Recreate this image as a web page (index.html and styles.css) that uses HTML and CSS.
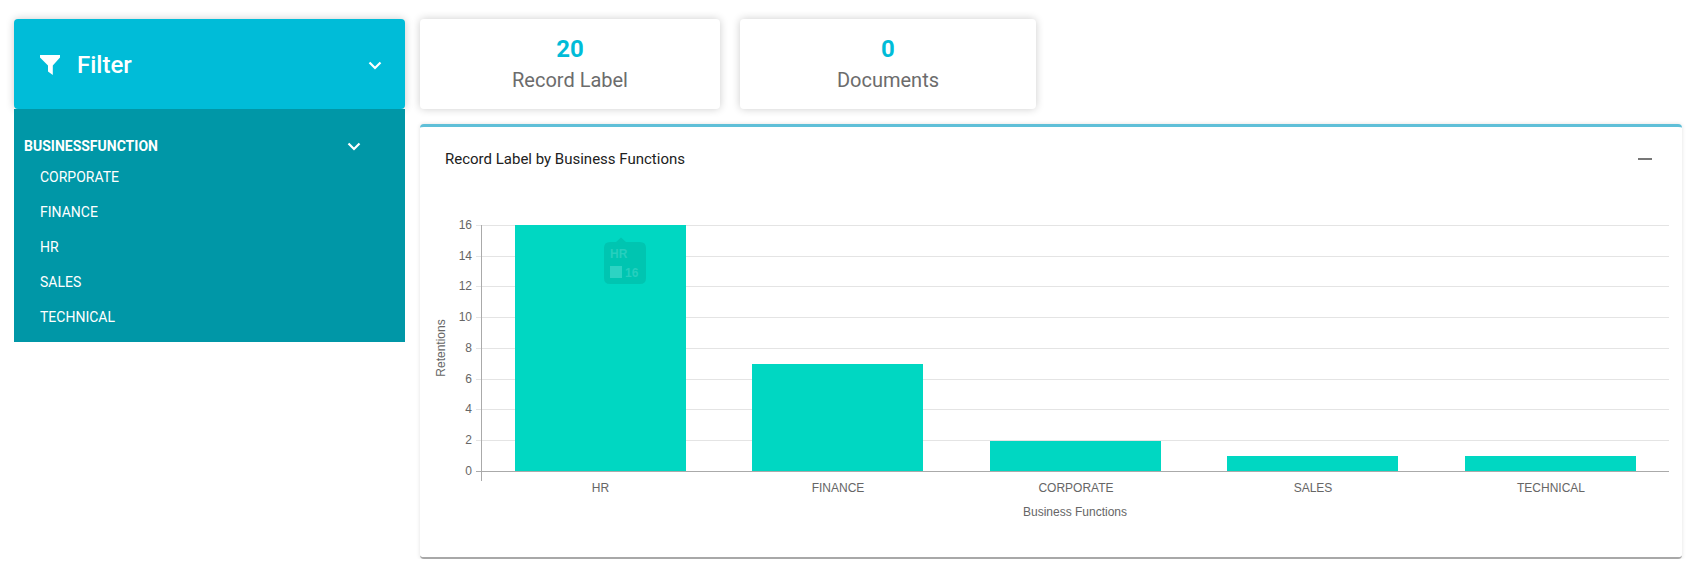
FILE: index.html
```html
<!DOCTYPE html>
<html lang="en">
<head>
    <meta charset="UTF-8">
    <title>Record Label Dashboard</title>
    <link rel="stylesheet" href="styles.css">
</head>
<body>
    <aside class="sidebar">
        <div class="filter-head">
            <svg class="filter-icon" viewBox="0 0 20 20"><path d="M0 0H20V2.500L12.800 10.500V20L8 16.500V10.500L0 2.500Z"/></svg>
            <span class="filter-title">Filter</span>
            <svg class="chevron" viewBox="0 0 14 9"><path d="M1.500 1.500L7 7L12.500 1.500"/></svg>
        </div>
        <div class="filter-body">
            <div class="group-head">
                <span class="group-title">BUSINESSFUNCTION</span>
                <svg class="chevron" viewBox="0 0 14 9"><path d="M1.500 1.500L7 7L12.500 1.500"/></svg>
            </div>
            <ul class="group-list">
                <li>CORPORATE</li>
                <li>FINANCE</li>
                <li>HR</li>
                <li>SALES</li>
                <li>TECHNICAL</li>
            </ul>
        </div>
    </aside>

    <main class="content">
        <div class="stats">
            <div class="stat stat-records">
                <div class="stat-value">20</div>
                <div class="stat-label">Record Label</div>
            </div>
            <div class="stat stat-docs">
                <div class="stat-value">0</div>
                <div class="stat-label">Documents</div>
            </div>
        </div>

        <section class="panel">
            <div class="panel-head">
                <h3 class="panel-title">Record Label by Business Functions</h3>
                <span class="minimize"></span>
            </div>
            <!-- viewBox uses page coordinates so the numbers read like the chart -->
            <svg class="chart" viewBox="420 190 1262 367">
                <g class="grid">
                    <path d="M476 225.500H1669"/>
                    <path d="M476 256.500H1669"/>
                    <path d="M476 286.500H1669"/>
                    <path d="M476 317.500H1669"/>
                    <path d="M476 348.500H1669"/>
                    <path d="M476 379.500H1669"/>
                    <path d="M476 409.500H1669"/>
                    <path d="M476 440.500H1669"/>
                </g>
                <g class="bars">
                    <rect x="515" y="225" width="171" height="246"/>
                    <rect x="752" y="364" width="171" height="107"/>
                    <rect x="990" y="441" width="171" height="30"/>
                    <rect x="1227" y="456" width="171" height="15"/>
                    <rect x="1465" y="456" width="171" height="15"/>
                </g>
                <g class="axis">
                    <path d="M481.500 225V481"/>
                    <path d="M476 471.500H1669"/>
                </g>
                <g class="ticks-y">
                    <text x="472" y="229">16</text>
                    <text x="472" y="260">14</text>
                    <text x="472" y="290">12</text>
                    <text x="472" y="321">10</text>
                    <text x="472" y="352">8</text>
                    <text x="472" y="383">6</text>
                    <text x="472" y="413">4</text>
                    <text x="472" y="444">2</text>
                    <text x="472" y="475">0</text>
                </g>
                <g class="ticks-x">
                    <text x="600.500" y="492">HR</text>
                    <text x="838" y="492">FINANCE</text>
                    <text x="1076" y="492">CORPORATE</text>
                    <text x="1313" y="492">SALES</text>
                    <text x="1551" y="492">TECHNICAL</text>
                    <text x="1075" y="516">Business Functions</text>
                </g>
                <text class="axis-title" transform="translate(445 348) rotate(-90)">Retentions</text>
                <g class="chart-tip">
                    <path d="M610 242H616L621 237.500L626 242H640Q646 242 646 248V278Q646 284 640 284H610Q604 284 604 278V248Q604 242 610 242Z"/>
                    <text class="tip-title" x="610" y="258">HR</text>
                    <rect class="tip-swatch" x="610" y="266" width="12" height="12"/>
                    <text class="tip-value" x="625" y="277">16</text>
                </g>
            </svg>
        </section>
    </main>
</body>
</html>
```

FILE: styles.css
```css
body {
    margin: 0;
    padding: 19px 14px 0;
    display: flex;
    gap: 15px;
    align-items: flex-start;
    background-color: #fff;
    font-family: Roboto, "Liberation Sans", sans-serif;
}
.sidebar {
    width: 391px;
    flex-shrink: 0;
}
.filter-head {
    height: 90px;
    display: flex;
    align-items: center;
    padding: 2px 23px 0 26px;
    box-sizing: border-box;
    background-color: #00bcd8;
    border-radius: 4px;
    box-shadow: 0 0 8px rgba(0, 0, 0, 0.2);
    color: #fff;
}
.filter-icon {
    width: 20px;
    height: 20px;
    fill: #fff;
    margin-right: 17px;
}
.filter-title {
    flex: 1;
    font-size: 24px;
    font-weight: 500;
}
.chevron {
    width: 14px;
    height: 9px;
    fill: none;
    stroke: #fff;
    stroke-width: 2.2;
}
.filter-body {
    height: 233px;
    padding: 27px 0 0 10px;
    box-sizing: border-box;
    background-color: #0097a7;
    color: #fff;
}
.group-head {
    display: flex;
    align-items: center;
    height: 20px;
    padding-right: 44px;
}
.group-title {
    flex: 1;
    font-size: 14px;
    font-weight: 700;
}
.group-list {
    list-style: none;
    margin: 0;
    padding: 4px 0 0 16px;
    font-size: 14px;
}
.group-list li {
    height: 35px;
    line-height: 35px;
}
.content {
    width: 1262px;
}
.stats {
    display: flex;
    gap: 20px;
}
.stat {
    height: 90px;
    padding-top: 16px;
    box-sizing: border-box;
    text-align: center;
    background-color: #fff;
    border-radius: 4px;
    box-shadow: 0 0 8px rgba(0, 0, 0, 0.2);
}
.stat-records {
    width: 300px;
}
.stat-docs {
    width: 296px;
}
.stat-value {
    font-size: 24px;
    font-weight: 700;
    line-height: 28px;
    color: #00bcd8;
}
.stat-label {
    margin-top: 4px;
    font-size: 20px;
    line-height: 26px;
    color: #6c6c6c;
}
.panel {
    margin-top: 15px;
    height: 435px;
    box-sizing: border-box;
    background-color: #fff;
    border-top: 3px solid #5fbfd8;
    border-bottom: 2px solid #a8a8a8;
    border-radius: 4px;
    box-shadow: 0 0 4px rgba(0, 0, 0, 0.12);
}
.panel-head {
    height: 63px;
    display: flex;
    align-items: center;
    justify-content: space-between;
    padding: 0 30px 0 25px;
    box-sizing: border-box;
}
.panel-title {
    margin: 0;
    font-size: 15px;
    font-weight: 400;
    color: #212121;
}
.minimize {
    width: 14px;
    height: 2px;
    background-color: #777;
}
.chart {
    display: block;
    width: 1262px;
    height: 367px;
}
.grid path {
    stroke: #e4e4e4;
    stroke-width: 1;
}
.axis path {
    stroke: #aaa;
    stroke-width: 1;
}
.bars rect {
    fill: #00d7c2;
}
.chart text {
    font-family: "Liberation Sans", Arial, sans-serif;
    font-size: 12px;
    fill: #666;
}
.ticks-y text {
    text-anchor: end;
}
.ticks-x text,
.axis-title {
    text-anchor: middle;
}
.chart-tip path {
    fill: #00c5b1;
}
.chart .chart-tip text {
    font-weight: 700;
    fill: #26cfbe;
}
.tip-swatch {
    fill: #2dd3c3;
}
```
